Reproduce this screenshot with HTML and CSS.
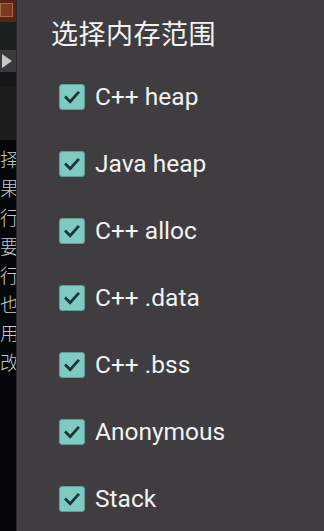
FILE: index.html
```html
<!DOCTYPE html>
<html lang="zh">
<head>
<meta charset="utf-8">
<link rel="stylesheet" href="styles.css">
</head>
<body>
<div class="screen">
  <aside class="behind">
    <div class="bh-top"><div class="bh-chip"></div></div>
    <div class="bh-dark"></div>
    <div class="bh-bar"><span class="bh-play"></span></div>
    <div class="bh-panel"></div>
    <div class="bh-text">
      <p>选择</p>
      <p>如果</p>
      <p>执行</p>
      <p>需要</p>
      <p>进行</p>
      <p>不也</p>
      <p>使用"</p>
      <p>更改</p>
    </div>
  </aside>
  <section class="dialog">
    <h1 class="title">选择内存范围</h1>
    <ul class="options">
      <li class="option"><span class="box"><svg viewBox="0 0 26 26"><path d="M6.5 13.5 L11 18 L19.5 8.5"/></svg></span><span class="label">C++ heap</span></li>
      <li class="option"><span class="box"><svg viewBox="0 0 26 26"><path d="M6.5 13.5 L11 18 L19.5 8.5"/></svg></span><span class="label">Java heap</span></li>
      <li class="option"><span class="box"><svg viewBox="0 0 26 26"><path d="M6.5 13.5 L11 18 L19.5 8.5"/></svg></span><span class="label">C++ alloc</span></li>
      <li class="option"><span class="box"><svg viewBox="0 0 26 26"><path d="M6.5 13.5 L11 18 L19.5 8.5"/></svg></span><span class="label">C++ .data</span></li>
      <li class="option"><span class="box"><svg viewBox="0 0 26 26"><path d="M6.5 13.5 L11 18 L19.5 8.5"/></svg></span><span class="label">C++ .bss</span></li>
      <li class="option"><span class="box"><svg viewBox="0 0 26 26"><path d="M6.5 13.5 L11 18 L19.5 8.5"/></svg></span><span class="label">Anonymous</span></li>
      <li class="option"><span class="box"><svg viewBox="0 0 26 26"><path d="M6.5 13.5 L11 18 L19.5 8.5"/></svg></span><span class="label">Stack</span></li>
    </ul>
  </section>
</div>
</body>
</html>
```
FILE: styles.css
```css
* { box-sizing: border-box; }
html, body { margin: 0; padding: 0; }
body {
  width: 324px;
  height: 531px;
  overflow: hidden;
  background: #3f3d40;
  font-family: Roboto, "Noto Sans", "Noto Sans CJK SC", sans-serif;
}
.screen {
  display: flex;
  height: 531px;
}
.behind {
  width: 17px;
  flex: none;
  display: flex;
  flex-direction: column;
  overflow: hidden;
  background: #05080b;
  border-right: 1px solid #2a2a2c;
}
.bh-top {
  height: 22px;
  background: #5b2312;
  padding: 3px 0 0 0;
}
.bh-chip {
  width: 13px;
  height: 14px;
  border: 1px solid #a06a48;
  background: #7a3a1c;
}
.bh-dark { height: 28px; background: #1b211f; }
.bh-bar {
  height: 22px;
  background: #3a3b3d;
  display: flex;
  align-items: center;
  padding-left: 2px;
}
.bh-play {
  width: 0; height: 0;
  border-left: 10px solid #c8c8c8;
  border-top: 7px solid transparent;
  border-bottom: 7px solid transparent;
}
.bh-panel { height: 68px; background: #1d1d1e; border-top: 14px solid #151617; }
.bh-text {
  flex: 1;
  margin-left: -19px;
  padding-top: 6px;
  font-family: "Noto Sans CJK SC", sans-serif;
  font-size: 19px;
  font-weight: 300;
  color: #c4c6c8;
}
.bh-text p {
  margin: 0;
  height: 29px;
  line-height: 26px;
  white-space: nowrap;
}
.dialog {
  flex: 1;
  background: #3f3d40;
  padding: 17px 0 0 34px;
}
.title {
  margin: 0;
  font-family: "Noto Sans CJK SC", sans-serif;
  font-weight: 400;
  font-size: 27px;
  line-height: 32px;
  color: #f2f2f2;
  letter-spacing: 0.5px;
}
.options {
  list-style: none;
  margin: 14px 0 0 0;
  padding: 0;
}
.option {
  height: 67px;
  display: flex;
  align-items: center;
  padding-left: 8px;
}
.box {
  width: 26px;
  height: 26px;
  flex: none;
  background: #7fcbc2;
  border: 1px solid #5f9e97;
  border-radius: 3px;
  display: flex;
}
.box svg {
  width: 24px;
  height: 24px;
}
.box path {
  fill: none;
  stroke: #173533;
  stroke-width: 3;
  stroke-linecap: square;
  stroke-linejoin: miter;
}
.label {
  margin-left: 10px;
  font-size: 24.5px;
  color: #f2f2f2;
  white-space: nowrap;
}
```
